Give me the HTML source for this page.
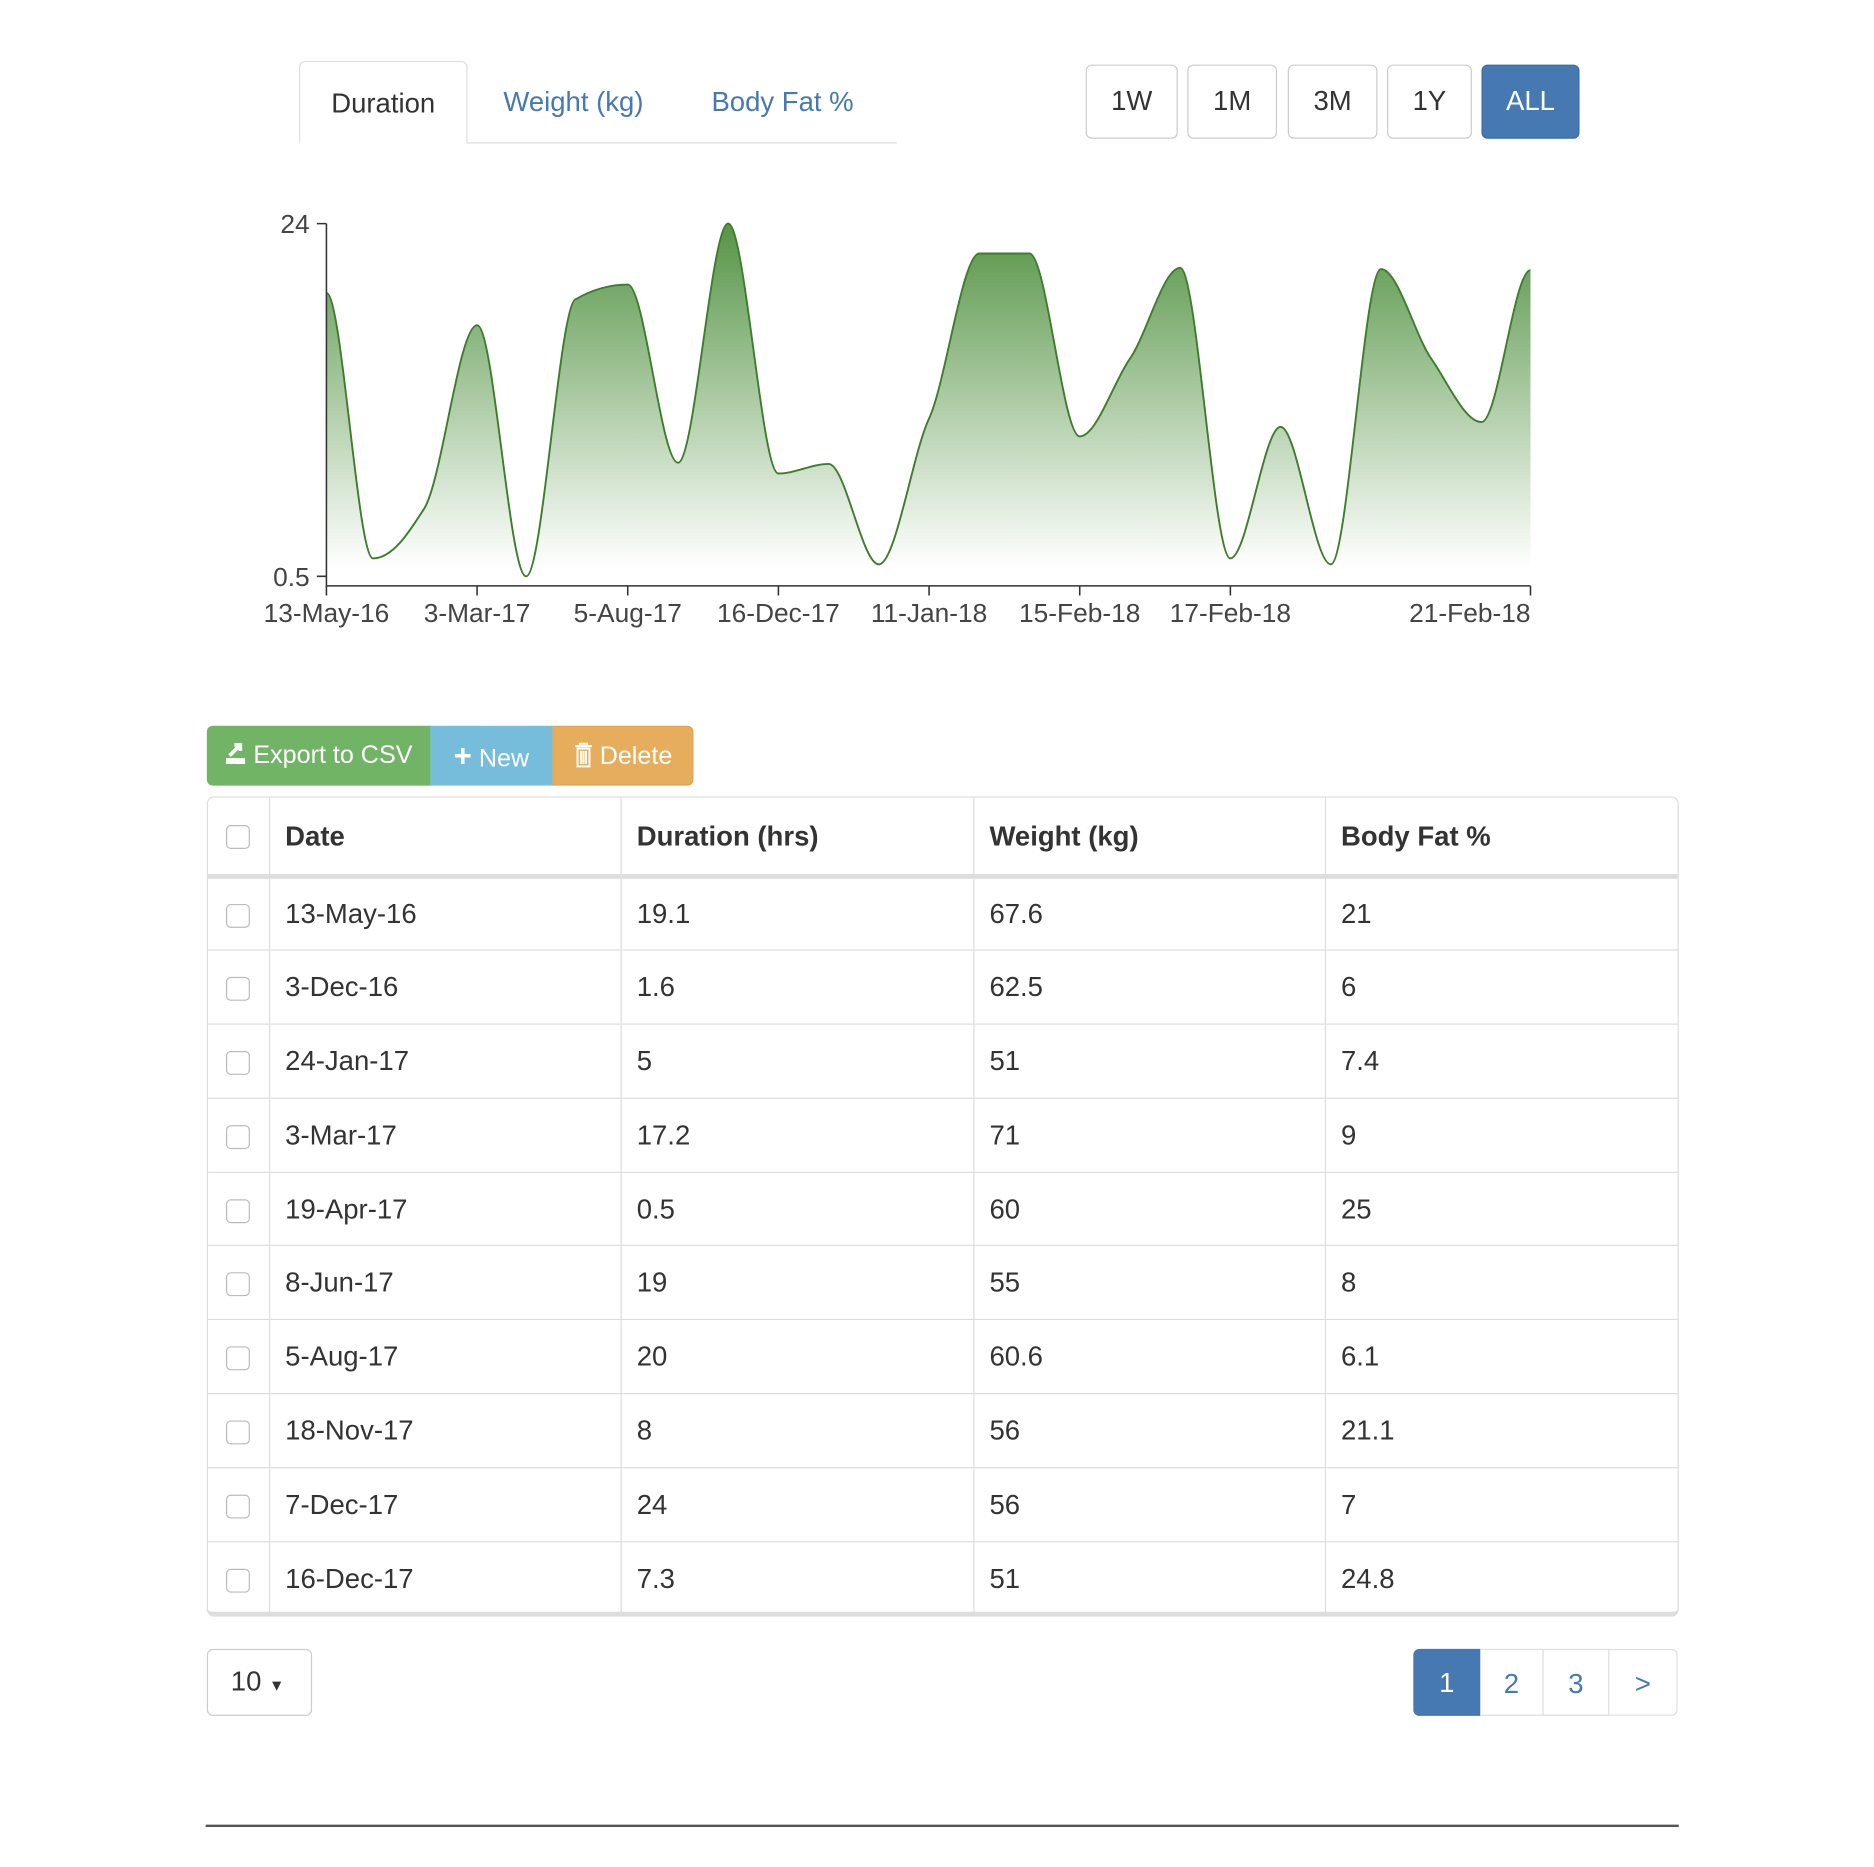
<!DOCTYPE html>
<html><head><meta charset="utf-8"><style>
html,body{margin:0;padding:0;background:#fff;width:1874px;height:1866px;overflow:hidden}
#w{position:absolute;left:0;top:0;width:1568px;height:1561px;transform:scale(1.1957);transform-origin:0 0;font-family:"Liberation Sans",sans-serif;color:#333}
.a{position:absolute;box-sizing:border-box}
.tab{font-size:23px;top:51px;height:69px;line-height:69px}
.rb{top:54px;height:62px;border:1.5px solid #ccc;border-radius:5px;font-size:23px;line-height:58px;text-align:center;color:#333}
.btn{top:607px;height:50px;line-height:50px;color:#fff;font-size:21px;text-align:center}
table{position:absolute;left:173px;top:667px;width:1230px;border-collapse:collapse;font-size:23px}
.tw{position:absolute;left:173px;top:666px;width:1231px;height:686px;border:1.5px solid #ddd;border-radius:6px;box-sizing:border-box;border-bottom:4px solid #ddd}
td,th{border-right:1.5px solid #ddd;border-bottom:1.5px solid #ddd;height:61.8px;padding:0 0 0 13px;text-align:left;box-sizing:border-box}
th{height:66px;border-bottom:4px solid #ddd}
td:last-child,th:last-child{border-right:none}
tr:last-child td{border-bottom:none}
.cb{display:inline-block;width:18px;height:18px;border:1.5px solid #bbb;border-radius:4px;vertical-align:middle;margin-left:3px}
.pg{top:1379px;height:56px;line-height:56px;font-size:23px;text-align:center;color:#4679b2;border:1.5px solid #ddd;border-left:none}
svg text{font-family:"Liberation Sans",sans-serif;font-size:22px;fill:#444}
</style></head><body><div id="w">
<div class="a" style="left:250px;top:119px;width:500px;height:0;border-top:1.5px solid #ddd"></div>
<div class="a tab" style="left:250px;width:141px;border:1.5px solid #ddd;border-bottom:1.5px solid #fff;border-radius:5px 5px 0 0;background:#fff;text-align:center">Duration</div>
<div class="a tab" style="left:421px;color:#4679b2">Weight (kg)</div>
<div class="a tab" style="left:595px;color:#4679b2">Body Fat %</div>
<div class="a rb" style="left:908px;width:77px">1W</div>
<div class="a rb" style="left:993px;width:75px">1M</div>
<div class="a rb" style="left:1077px;width:75px">3M</div>
<div class="a rb" style="left:1160px;width:71px">1Y</div>
<div class="a rb" style="left:1239px;width:82px;background:#4679b2;border-color:#3d6ca3;color:#fff">ALL</div>
<svg class="a" style="left:0;top:0" width="1550" height="560">
<defs><linearGradient id="g" x1="0" y1="0" x2="0" y2="1"><stop offset="0" stop-color="#4d8f3c" stop-opacity=".95"/><stop offset="0.95" stop-color="#4d8f3c" stop-opacity="0"/></linearGradient></defs>
<path fill="url(#g)" d="M273,245 C286,245 299,467 312,467 C330,467 345,440 355,425 C370,400 384,272 399,272 C413,272 426,482 440,482 C454,482 468,250 482,250 C496,242 511,238 525,238 C539,238 553,387 567,387 C581,387 595,187 609,187 C623,187 637,396 651,396 C665,396 679,388 693,388 C707,388 721,472 735,472 C749,472 763,380 777,350 C791,320 805,212 819,212 L861,212 C875,212 889,365 903,365 C917,365 931,320 945,300 C959,280 973,224 987,224 C1001,224 1015,467 1029,467 C1043,467 1057,357 1071,357 C1085,357 1099,472 1113,472 C1127,472 1141,225 1155,225 C1169,225 1183,280 1197,300 C1211,320 1225,353 1239,353 C1253,353 1266,226 1280,226 L1280,490 L273,490 Z"/>
<path fill="none" stroke="#3f7d2e" stroke-width="1.6" d="M273,245 C286,245 299,467 312,467 C330,467 345,440 355,425 C370,400 384,272 399,272 C413,272 426,482 440,482 C454,482 468,250 482,250 C496,242 511,238 525,238 C539,238 553,387 567,387 C581,387 595,187 609,187 C623,187 637,396 651,396 C665,396 679,388 693,388 C707,388 721,472 735,472 C749,472 763,380 777,350 C791,320 805,212 819,212 L861,212 C875,212 889,365 903,365 C917,365 931,320 945,300 C959,280 973,224 987,224 C1001,224 1015,467 1029,467 C1043,467 1057,357 1071,357 C1085,357 1099,472 1113,472 C1127,472 1141,225 1155,225 C1169,225 1183,280 1197,300 C1211,320 1225,353 1239,353 C1253,353 1266,226 1280,226"/>
<g stroke="#333" stroke-width="1.3" fill="none">
<path d="M273,187 V490 H1280"/><path d="M265,187H273M265,482H273"/>
<path d="M273,490v8M399,490v8M525,490v8M651,490v8M777,490v8M903,490v8M1029,490v8M1280,490v8"/>
</g>
<text x="259" y="195" text-anchor="end">24</text>
<text x="259" y="490" text-anchor="end">0.5</text>
<g text-anchor="middle">
<text x="273" y="520">13-May-16</text><text x="399" y="520">3-Mar-17</text><text x="525" y="520">5-Aug-17</text><text x="651" y="520">16-Dec-17</text><text x="777" y="520">11-Jan-18</text><text x="903" y="520">15-Feb-18</text><text x="1029" y="520">17-Feb-18</text></g>
<text x="1280" y="520" text-anchor="end">21-Feb-18</text>
</svg>
<div class="a btn" style="left:173px;width:187px;background:#72b466;border-radius:5px 0 0 5px"><svg width="18" height="20" viewBox="0 0 18 20" style="vertical-align:-2px"><path d="M1 14h16v5H1z M13 15.5h2v1.5h-2z" fill="#fff"/><path d="M4 12 L13 3 M8 3h5v5" stroke="#fff" stroke-width="3" fill="none"/></svg> Export to CSV</div>
<div class="a btn" style="left:360px;width:102px;background:#75bddb"><b style="font-size:26px">+</b> New</div>
<div class="a btn" style="left:462px;width:118px;background:#e6ad5c;border-radius:0 5px 5px 0;border:1px solid #dda552"><svg width="16" height="22" viewBox="0 0 16 22" style="vertical-align:-3px"><path d="M1 4h14M5 4V2h6v2M3 6h10v15H3z M6 8v11M8 8v11M10 8v11" stroke="#fff" stroke-width="1.6" fill="none"/></svg> Delete</div>
<div class="tw"></div>
<table>
<tr><th style="width:52px"><span class="cb"></span></th><th style="width:294px">Date</th><th style="width:295px">Duration (hrs)</th><th style="width:294px">Weight (kg)</th><th>Body Fat %</th></tr>
<tr><td><span class="cb"></span></td><td>13-May-16</td><td>19.1</td><td>67.6</td><td>21</td></tr>
<tr><td><span class="cb"></span></td><td>3-Dec-16</td><td>1.6</td><td>62.5</td><td>6</td></tr>
<tr><td><span class="cb"></span></td><td>24-Jan-17</td><td>5</td><td>51</td><td>7.4</td></tr>
<tr><td><span class="cb"></span></td><td>3-Mar-17</td><td>17.2</td><td>71</td><td>9</td></tr>
<tr><td><span class="cb"></span></td><td>19-Apr-17</td><td>0.5</td><td>60</td><td>25</td></tr>
<tr><td><span class="cb"></span></td><td>8-Jun-17</td><td>19</td><td>55</td><td>8</td></tr>
<tr><td><span class="cb"></span></td><td>5-Aug-17</td><td>20</td><td>60.6</td><td>6.1</td></tr>
<tr><td><span class="cb"></span></td><td>18-Nov-17</td><td>8</td><td>56</td><td>21.1</td></tr>
<tr><td><span class="cb"></span></td><td>7-Dec-17</td><td>24</td><td>56</td><td>7</td></tr>
<tr><td><span class="cb"></span></td><td>16-Dec-17</td><td>7.3</td><td>51</td><td>24.8</td></tr>
</table>
<div class="a" style="left:173px;top:1379px;width:88px;height:56px;border:1.5px solid #ccc;border-radius:5px;line-height:53px;font-size:23px;padding-left:19px">10 <span style="font-size:13px">&#9660;</span></div>
<div class="a pg" style="left:1182px;width:56px;background:#4679b2;color:#fff;border:none;border-radius:5px 0 0 5px">1</div>
<div class="a pg" style="left:1238px;width:53px">2</div>
<div class="a pg" style="left:1291px;width:55px">3</div>
<div class="a pg" style="left:1346px;width:57px;border-radius:0 5px 5px 0">&gt;</div>
<div class="a" style="left:172px;top:1526px;width:1232px;height:2px;background:#555"></div>
</div></body></html>
